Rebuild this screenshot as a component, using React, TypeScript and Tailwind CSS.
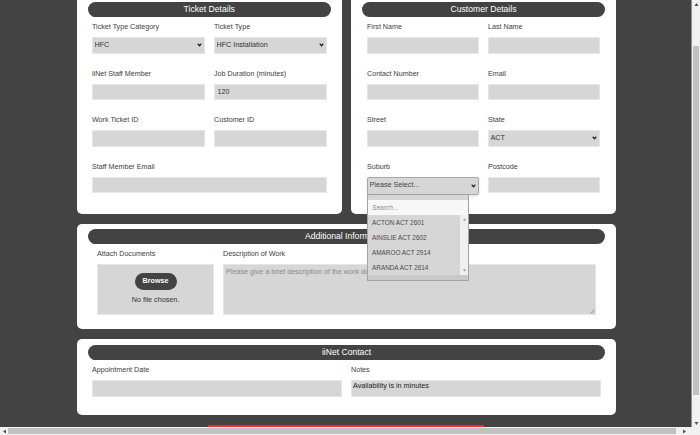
const fieldCls = "block w-full h-[16.5px] bg-[#d6d6d6] border border-[#e6e6e6] outline-none text-[7.2px] text-[#333]";

const Label = ({ children }: { children: string }) => (
  <label className="block h-[10px] leading-[10px] mb-[5px] text-[7.15px] text-[#3d3d3d]">{children}</label>
);

const Field = ({ label, value, wide }: { label: string; value?: string; wide?: boolean }) => (
  <div className={wide ? "col-span-2 mb-[15px]" : "mb-[15px]"}>
    <Label>{label}</Label>
    <input className={fieldCls + " pl-[2.5px]"} defaultValue={value} />
  </div>
);

const Chevron = () => (
  <svg width="5" height="4" viewBox="0 0 10 8" className="absolute right-[3px] top-1/2 -translate-y-1/2 pointer-events-none">
    <path d="M1.5 1.5 L5 5.5 L8.5 1.5" fill="none" stroke="#222" strokeWidth="2.4" />
  </svg>
);

const SelectField = ({ label, value }: { label: string; value: string }) => (
  <div className="mb-[15px]">
    <Label>{label}</Label>
    <div className="relative">
      <select className={fieldCls + " appearance-none pl-[1.5px]"} defaultValue={value}>
        <option>{value}</option>
      </select>
      <Chevron />
    </div>
  </div>
);

const Pill = ({ children }: { children: string }) => (
  <h2 className="mx-[11px] h-[15px] rounded-full bg-[#434343] text-center text-[8.6px] leading-[15px] text-white font-normal">
    {children}
  </h2>
);

const Arrow = ({ d, fill = "#505050" }: { d: string; fill?: string }) => (
  <svg width="5" height="5" viewBox="0 0 10 10" className="shrink-0">
    <path d={d} fill={fill} />
  </svg>
);

const SuburbMenu = () => (
  <div className="absolute left-[367px] top-[194px] w-[102px] h-[87px] bg-[#c9c9c9] border border-[#a3a3a3] flex flex-col">
    <div className="h-[5px] bg-[#d6d6d6]" />
    <div className="h-[15px] bg-[#f7f7f7] pl-[4px] text-[6.6px] leading-[15px] italic text-[#8a8a8a]">Search...</div>
    <div className="flex h-[60px]">
      <ul className="flex-1 bg-[#d6d6d6] text-[6.4px] text-[#4a4a4a] pl-[4px]">
        <li className="h-[15px] leading-[15px]">ACTON ACT 2601</li>
        <li className="h-[15px] leading-[15px]">AINSLIE ACT 2602</li>
        <li className="h-[15px] leading-[15px]">AMAROO ACT 2914</li>
        <li className="h-[15px] leading-[15px]">ARANDA ACT 2614</li>
      </ul>
      <div className="w-[8px] bg-[#f0f0f0] flex flex-col items-center justify-between py-[2px]">
        <Arrow d="M5 3 L8 7 L2 7 Z" fill="#8a8a8a" />
        <Arrow d="M5 7 L8 3 L2 3 Z" fill="#8a8a8a" />
      </div>
    </div>
  </div>
);

export default function App() {
  return (
    <div className="w-[700px] h-[435px] overflow-hidden flex flex-col bg-[#434343] font-['Liberation_Sans',Arial,sans-serif]">
      <div className="flex flex-1 min-h-0">
        <main className="relative w-[691px] pl-[77px]">
          <div className="flex gap-[9.5px] w-[539px]">
            <section className="w-[264.5px] h-[214px] bg-white rounded-b-[5px] pt-[2px]">
              <Pill>Ticket Details</Pill>
              <div className="grid grid-cols-2 gap-x-[9.5px] px-[15px] pt-[5px]">
                <SelectField label="Ticket Type Category" value="HFC" />
                <SelectField label="Ticket Type" value="HFC Installation" />
                <Field label="iiNet Staff Member" />
                <Field label="Job Duration (minutes)" value="120" />
                <Field label="Work Ticket ID" />
                <Field label="Customer ID" />
                <Field label="Staff Member Email" wide />
              </div>
            </section>
            <section className="w-[265px] h-[214px] bg-white rounded-b-[5px] pt-[2px]">
              <Pill>Customer Details</Pill>
              <div className="grid grid-cols-2 gap-x-[9px] pl-[16px] pr-[16px] pt-[5px]">
                <Field label="First Name" />
                <Field label="Last Name" />
                <Field label="Contact Number" />
                <Field label="Email" />
                <Field label="Street" />
                <SelectField label="State" value="ACT" />
                <div>
                  <Label>Suburb</Label>
                  <div className="relative">
                    <select className="block w-full h-[18px] appearance-none bg-[#d6d6d6] border border-[#a8a8a8] rounded-[2px] shadow-sm outline-none pl-[1.5px] text-[7.2px] text-[#444]">
                      <option>Please Select...</option>
                    </select>
                    <Chevron />
                  </div>
                </div>
                <Field label="Postcode" />
              </div>
            </section>
          </div>

          <section className="w-[539px] h-[105px] mt-[10px] bg-white rounded-[5px] pt-[5px]">
            <Pill>Additional Information</Pill>
            <div className="flex gap-[9px] pl-[20px] pt-[5px]">
              <div className="w-[117px]">
                <Label>Attach Documents</Label>
                <div className="h-[51px] bg-[#d6d6d6] border border-[#e6e6e6] flex flex-col items-center pt-[8px]">
                  <button className="w-[42px] h-[17px] rounded-full bg-[#434343] text-white font-bold text-[7.2px]">Browse</button>
                  <p className="mt-[5px] text-[7.2px] leading-[10px] text-[#333]">No file chosen.</p>
                </div>
              </div>
              <div className="relative w-[373px]">
                <Label>Description of Work</Label>
                <textarea
                  className="block w-full h-[51px] resize-none bg-[#d6d6d6] border border-[#e6e6e6] outline-none p-[2px] text-[7.2px] leading-[9px] placeholder:text-[#8a8a8a]"
                  placeholder="Please give a brief description of the work done"
                />
                <svg width="5" height="5" viewBox="0 0 10 10" className="absolute right-[1px] bottom-[1px]">
                  <path d="M9 1 L1 9 M9 5 L5 9" stroke="#777" strokeWidth="1.2" />
                </svg>
              </div>
            </div>
          </section>

          <section className="w-[539px] h-[76px] mt-[10px] bg-white rounded-[5px] pt-[6px]">
            <Pill>iiNet Contact</Pill>
            <div className="flex gap-[9px] pl-[15px] pt-[5px]">
              <div className="w-[250px]">
                <Label>Appointment Date</Label>
                <input className={fieldCls} />
              </div>
              <div className="w-[250px]">
                <Label>Notes</Label>
                <div className="h-[16.5px] bg-[#d6d6d6] border border-[#e6e6e6] px-[1px] text-[7.2px] leading-[9px] text-[#222]">
                  Availability is in minutes
                </div>
              </div>
            </div>
          </section>

          <div className="w-[276px] h-[2px] ml-[131px] mt-[10px] bg-[#ff2a2a]" />
          <SuburbMenu />
        </main>

        <div className="w-[9px] bg-[#f1f1f1] border-l border-[#8f8f8f] flex flex-col items-center">
          <div className="h-[46px] pt-[2px]">
            <Arrow d="M5 2 L9 8 L1 8 Z" />
          </div>
          <div className="w-[6px] h-[349px] bg-[#c1c1c1]" />
          <div className="flex-1 flex items-end pb-[1px]">
            <Arrow d="M5 8 L9 2 L1 2 Z" />
          </div>
        </div>
      </div>

      <div className="h-[8px] bg-[#f1f1f1] flex items-center">
        <div className="w-[8px] flex justify-center">
          <Arrow d="M2 5 L8 1 L8 9 Z" />
        </div>
        <div className="w-[668px] h-[6px] bg-[#c1c1c1]" />
        <div className="w-[16px] flex justify-center">
          <Arrow d="M8 5 L2 1 L2 9 Z" />
        </div>
      </div>
    </div>
  );
}
